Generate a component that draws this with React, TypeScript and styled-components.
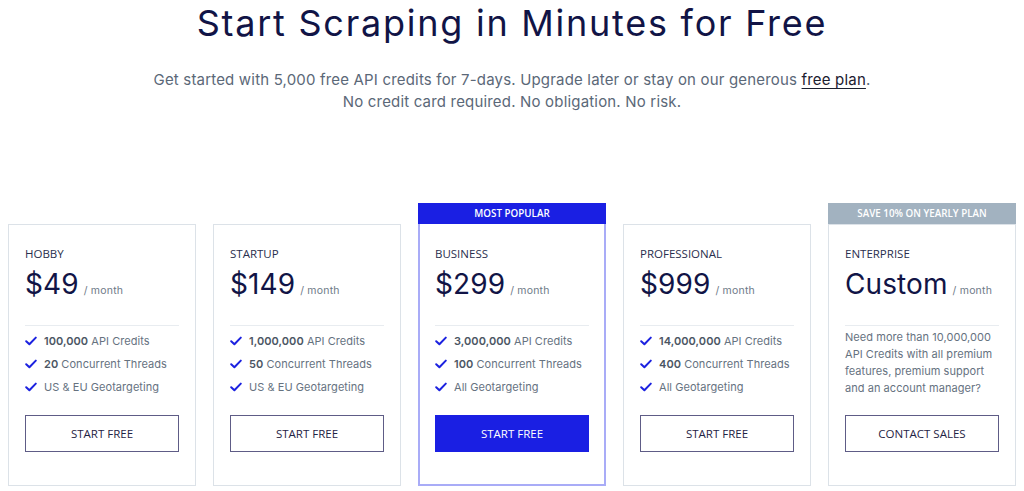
import React from "react";
import styled, { createGlobalStyle, css } from "styled-components";

const GlobalStyle = createGlobalStyle`
  html, body {
    margin: 0;
    padding: 0;
    background: #ffffff;
  }
  body {
    font-family: Inter, "Open Sans", "Liberation Sans", sans-serif;
    -webkit-font-smoothing: antialiased;
  }
  * { box-sizing: border-box; }
`;

const Page = styled.div`
  width: 1024px;
  padding: 1px 8px 0;
`;

const Header = styled.header`
  display: flex;
  flex-direction: column;
  align-items: center;
  text-align: center;
`;

const Title = styled.h1`
  margin: 0;
  font-family: Inter, "Open Sans", sans-serif;
  font-weight: 400;
  font-size: 36px;
  line-height: 44px;
  letter-spacing: 1.75px;
  color: #111446;
`;

const Subtitle = styled.p`
  margin: 24px 0 0;
  font-family: Inter, "Open Sans", sans-serif;
  font-size: 15px;
  line-height: 22px;
  letter-spacing: 0.18px;
  color: #5b6878;
`;

const Link = styled.a`
  color: #1c2030;
  text-decoration: underline;
  text-underline-offset: 3px;
`;

const Plans = styled.div`
  display: grid;
  grid-template-columns: repeat(5, 188px);
  column-gap: 17px;
  margin-top: 90px;
  align-items: stretch;
`;

const Column = styled.div`
  display: flex;
  flex-direction: column;
`;

const Badge = styled.div<{ $tone?: "primary" | "muted" | "none" }>`
  height: 21px;
  display: flex;
  align-items: center;
  justify-content: center;
  font-family: "Open Sans", sans-serif;
  font-weight: 600;
  font-size: 9.8px;
  color: #ffffff;
  background: ${(p) =>
    p.$tone === "primary" ? "#1a1fe3" : p.$tone === "muted" ? "#a2b2c0" : "transparent"};
`;

const Card = styled.div<{ $featured?: boolean }>`
  flex: 1;
  display: flex;
  flex-direction: column;
  border: 1px solid #dce2e8;
  padding: 21px 16px 33px;
  ${(p) =>
    p.$featured &&
    css`
      border: 2px solid #a9acf7;
      border-top: none;
      padding: 22px 15px 32px;
    `}
`;

const PlanName = styled.div`
  font-family: "Open Sans", sans-serif;
  font-size: 11.5px;
  line-height: 16px;
  color: #2a2f4e;
`;

const PriceRow = styled.div`
  margin-top: 4px;
  display: flex;
  align-items: baseline;
  gap: 5px;
  height: 36px;
`;

const Price = styled.span`
  font-family: Inter, "Open Sans", sans-serif;
  font-size: 28px;
  line-height: 36px;
  letter-spacing: 0.1px;
  color: #111446;
`;

const Per = styled.span`
  font-family: Inter, "Open Sans", sans-serif;
  font-size: 10.5px;
  letter-spacing: 0.2px;
  color: #6e7a88;
`;

const Divider = styled.hr`
  margin: 23px 0 0;
  border: none;
  height: 1px;
  background: #e8ecf0;
`;

const Features = styled.ul`
  list-style: none;
  margin: 3px 0 0;
  padding: 0;
  min-height: 69px;
  display: flex;
  flex-direction: column;
`;

const Feature = styled.li`
  display: flex;
  align-items: center;
  gap: 7px;
  height: 23px;
  white-space: nowrap;
  font-family: Inter, "Open Sans", sans-serif;
  font-size: 11px;
  letter-spacing: 0.05px;
  color: #66727f;
  b {
    font-weight: 600;
    color: #4b5563;
  }
`;

const Check = styled.svg`
  flex: none;
  width: 12px;
  height: 10px;
`;

const Description = styled.p`
  margin: 3px -6px 0 0;
  min-height: 69px;
  font-family: Inter, "Open Sans", sans-serif;
  font-size: 11px;
  line-height: 17px;
  letter-spacing: 0.05px;
  color: #66727f;
`;

const Button = styled.button<{ $primary?: boolean }>`
  margin-top: 17px;
  height: 37px;
  width: 100%;
  font-family: "Open Sans", sans-serif;
  font-size: 11.5px;
  color: ${(p) => (p.$primary ? "#ffffff" : "#1f2344")};
  background: ${(p) => (p.$primary ? "#1a1fe3" : "#ffffff")};
  border: 1px solid ${(p) => (p.$primary ? "#1a1fe3" : "#5e5c86")};
  border-radius: 0;
  cursor: pointer;
`;

const CheckIcon = () => (
  <Check viewBox="0 0 12 10">
    <path d="M1.2 5.2 L4.4 8.3 L10.8 1.6" fill="none" stroke="#1c22e0" strokeWidth="2" strokeLinecap="round" strokeLinejoin="round" />
  </Check>
);

type Plan = {
  name: string;
  price: string;
  features?: [string, string][];
  description?: string;
  cta: string;
  badge?: string;
  tone?: "primary" | "muted";
  featured?: boolean;
};

const plans: Plan[] = [
  {
    name: "HOBBY",
    price: "$49",
    features: [
      ["100,000", " API Credits"],
      ["20", " Concurrent Threads"],
      ["", "US & EU Geotargeting"],
    ],
    cta: "START FREE",
  },
  {
    name: "STARTUP",
    price: "$149",
    features: [
      ["1,000,000", " API Credits"],
      ["50", " Concurrent Threads"],
      ["", "US & EU Geotargeting"],
    ],
    cta: "START FREE",
  },
  {
    name: "BUSINESS",
    price: "$299",
    features: [
      ["3,000,000", " API Credits"],
      ["100", " Concurrent Threads"],
      ["", "All Geotargeting"],
    ],
    cta: "START FREE",
    badge: "MOST POPULAR",
    tone: "primary",
    featured: true,
  },
  {
    name: "PROFESSIONAL",
    price: "$999",
    features: [
      ["14,000,000", " API Credits"],
      ["400", " Concurrent Threads"],
      ["", "All Geotargeting"],
    ],
    cta: "START FREE",
  },
  {
    name: "ENTERPRISE",
    price: "Custom",
    description:
      "Need more than 10,000,000 API Credits with all premium features, premium support and an account manager?",
    cta: "CONTACT SALES",
    badge: "SAVE 10% ON YEARLY PLAN",
    tone: "muted",
  },
];

export default function App() {
  return (
    <>
      <GlobalStyle />
      <Page>
        <Header>
          <Title>Start Scraping in Minutes for Free</Title>
          <Subtitle>
            Get started with 5,000 free API credits for 7-days. Upgrade later or stay on our generous{" "}
            <Link href="#">free plan</Link>.
            <br />
            No credit card required. No obligation. No risk.
          </Subtitle>
        </Header>
        <Plans>
          {plans.map((plan) => (
            <Column key={plan.name}>
              <Badge $tone={plan.tone ?? "none"}>{plan.badge}</Badge>
              <Card $featured={plan.featured}>
                <PlanName>{plan.name}</PlanName>
                <PriceRow>
                  <Price>{plan.price}</Price>
                  <Per>/ month</Per>
                </PriceRow>
                <Divider />
                {plan.features ? (
                  <Features>
                    {plan.features.map(([bold, rest]) => (
                      <Feature key={rest + bold}>
                        <CheckIcon />
                        <span>
                          {bold && <b>{bold}</b>}
                          {rest}
                        </span>
                      </Feature>
                    ))}
                  </Features>
                ) : (
                  <Description>{plan.description}</Description>
                )}
                <Button $primary={plan.featured}>{plan.cta}</Button>
              </Card>
            </Column>
          ))}
        </Plans>
      </Page>
    </>
  );
}
